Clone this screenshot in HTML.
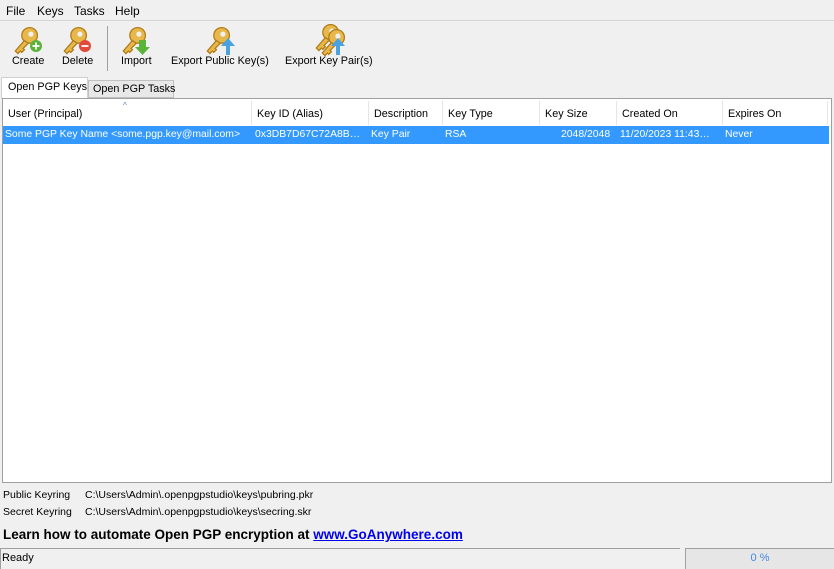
<!DOCTYPE html>
<html><head><style>
*{margin:0;padding:0;box-sizing:border-box}
body{width:834px;height:569px;background:#f0f0f0;font-family:"Liberation Sans",sans-serif;font-size:11px;color:#000;position:relative;overflow:hidden}
.a{position:absolute;white-space:nowrap}
.menu span{position:absolute;top:4px;font-size:12px}
.tb{position:absolute;top:55px;font-size:10.8px}
.hd{position:absolute;top:101px;height:24px;border-right:1px solid #e5e5e5;padding:7px 0 0 5px;background:#fff;font-size:10.8px;white-space:nowrap;overflow:hidden}
.cell{position:absolute;top:129px;color:#fff;font-size:10.4px;white-space:nowrap}
</style></head><body>
<div class="menu"><span style="left:6px">File</span><span style="left:37px">Keys</span><span style="left:74px">Tasks</span><span style="left:115px">Help</span></div>
<div class="a" style="left:0;top:20px;width:834px;height:1px;background:#d5d5d5"></div>
<svg class="a" style="left:0;top:24px" width="400" height="32">
<defs><g id="k" transform="scale(1.3)"><circle cx="12" cy="8" r="6" fill="#e8b84a" stroke="#b07d1a"/><circle cx="13" cy="7" r="2" fill="#f0f0f0"/><path d="M8 12 L1 20 L3 22 L5 20 L6 21 L8 19 L7 18 L11 14Z" fill="#e8b84a" stroke="#b07d1a"/></g></defs>
<use href="#k" x="14" y="1"/><circle cx="36" cy="22" r="6" fill="#5bb33a"/><path d="M32.5 22h7M36 18.5v7" stroke="#fff" stroke-width="1.8"/>
<use href="#k" x="63" y="1"/><circle cx="85" cy="22" r="6" fill="#e04a3a"/><path d="M81.5 22h7" stroke="#fff" stroke-width="1.8"/>
<use href="#k" x="122" y="1"/><path d="M139 16h7v7h4l-7.5 8-7.5-8h4z" fill="#5bb33a"/>
<use href="#k" x="206" y="1"/><path d="M226 31v-9h-5l7-8 7 8h-5v9z" fill="#4aa3e0"/>
<use href="#k" x="315" y="-2"/><use href="#k" x="321" y="3"/><path d="M336 31v-9h-5l7-8 7 8h-5v9z" fill="#4aa3e0"/>
</svg>
<div class="a" style="left:107px;top:26px;width:1px;height:45px;background:#a0a0a0"></div>
<div class="tb" style="left:12px">Create</div><div class="tb" style="left:62px">Delete</div><div class="tb" style="left:121px">Import</div><div class="tb" style="left:171px">Export Public Key(s)</div><div class="tb" style="left:285px">Export Key Pair(s)</div>
<div class="a" style="left:1px;top:77px;width:87px;height:22px;background:#fff;border:1px solid #d0d0d0;border-bottom:none;padding:3px 0 0 6px;font-size:10.8px">Open PGP Keys</div>
<div class="a" style="left:88px;top:80px;width:86px;height:18px;background:#e8e8e8;border:1px solid #c0c0c0;padding:2px 0 0 4px;font-size:10.8px">Open PGP Tasks</div>
<div class="a" style="left:2px;top:98px;width:830px;height:385px;background:#fff;border:1px solid #a0a0a0"></div>
<div class="hd" style="left:3px;width:249px">User (Principal)</div>
<div class="a" style="left:123px;top:101px;font-size:8px;color:#5a7fb0">^</div>
<div class="hd" style="left:252px;width:117px">Key ID (Alias)</div>
<div class="hd" style="left:369px;width:74px">Description</div>
<div class="hd" style="left:443px;width:97px">Key Type</div>
<div class="hd" style="left:540px;width:77px">Key Size</div>
<div class="hd" style="left:617px;width:106px">Created On</div>
<div class="hd" style="left:723px;width:105px">Expires On</div>
<div class="a" style="left:3px;top:126px;width:826px;height:18px;background:#3399ff"></div>
<div class="cell" style="left:5px">Some PGP Key Name &lt;some.pgp.key@mail.com&gt;</div>
<div class="cell" style="left:255px">0x3DB7D67C72A8B…</div>
<div class="cell" style="left:371px">Key Pair</div>
<div class="cell" style="left:445px">RSA</div>
<div class="cell" style="left:561px">2048/2048</div>
<div class="cell" style="left:620px">11/20/2023 11:43…</div>
<div class="cell" style="left:725px">Never</div>
<div class="a" style="left:3px;top:489px;font-size:10.5px">Public Keyring</div><div class="a" style="left:85px;top:489px;font-size:10.5px">C:\Users\Admin\.openpgpstudio\keys\pubring.pkr</div>
<div class="a" style="left:3px;top:506px;font-size:10.5px">Secret Keyring</div><div class="a" style="left:85px;top:506px;font-size:10.5px">C:\Users\Admin\.openpgpstudio\keys\secring.skr</div>
<div class="a" style="left:3px;top:527px;font-size:13.5px;font-weight:bold">Learn how to automate Open PGP encryption at <span style="color:#0000ee;text-decoration:underline">www.GoAnywhere.com</span></div>
<div class="a" style="left:0;top:548px;width:680px;height:21px;border-top:1px solid #a0a0a0;border-left:1px solid #a0a0a0;background:#f0f0f0;padding:3px 0 0 1px;font-size:11px">Ready</div>
<div class="a" style="left:685px;top:548px;width:149px;height:21px;border-top:1px solid #a0a0a0;border-left:1px solid #a0a0a0;background:#e6e6e6;padding:3px 0 0 0;text-align:center;color:#3c8ce0;font-size:11px">0 %</div>
</body></html>
